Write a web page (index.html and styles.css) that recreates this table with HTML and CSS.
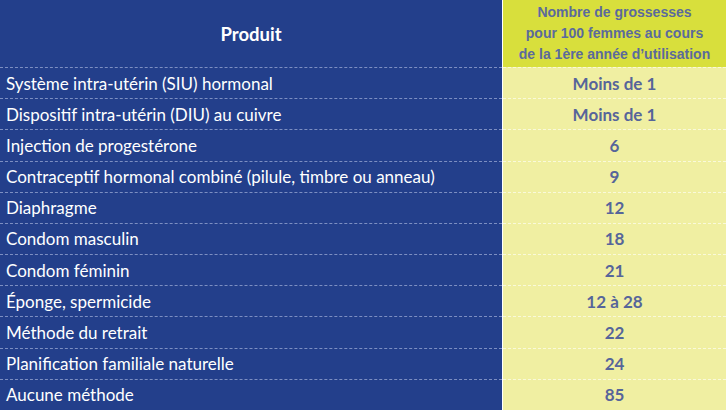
FILE: index.html
```html
<!DOCTYPE html>
<html lang="fr">
<head>
<meta charset="utf-8">
<link rel="stylesheet" href="styles.css">
</head>
<body>
<div class="table">
  <div class="head-left">Produit</div>
  <div class="head-right">Nombre de grossesses<br>pour 100 femmes au cours<br>de la 1ère année d’utilisation</div>

  <div class="cell-left">Système intra-utérin (SIU) hormonal</div><div class="cell-right">Moins de 1</div>
  <div class="cell-left">Dispositif intra-utérin (DIU) au cuivre</div><div class="cell-right">Moins de 1</div>
  <div class="cell-left">Injection de progestérone</div><div class="cell-right">6</div>
  <div class="cell-left">Contraceptif hormonal combiné (pilule, timbre ou anneau)</div><div class="cell-right">9</div>
  <div class="cell-left">Diaphragme</div><div class="cell-right">12</div>
  <div class="cell-left">Condom masculin</div><div class="cell-right">18</div>
  <div class="cell-left">Condom féminin</div><div class="cell-right">21</div>
  <div class="cell-left">Éponge, spermicide</div><div class="cell-right">12 à 28</div>
  <div class="cell-left">Méthode du retrait</div><div class="cell-right">22</div>
  <div class="cell-left">Planification familiale naturelle</div><div class="cell-right">24</div>
  <div class="cell-left">Aucune méthode</div><div class="cell-right">85</div>
</div>
</body>
</html>
```
FILE: styles.css
```css
html, body {
  margin: 0;
  padding: 0;
  background: #ffffff;
}
.table {
  width: 726px;
  height: 410px;
  display: grid;
  grid-template-columns: 502px 1fr;
  grid-template-rows: 67px repeat(11, 1fr);
  column-gap: 1px;
  background: #ffffff;
  font-family: Lato, "Noto Sans", sans-serif;
}
.head-left {
  background: #233f8b;
  color: #ffffff;
  font-weight: 700;
  font-size: 18.5px;
  display: flex;
  align-items: center;
  justify-content: center;
}
.head-right {
  background: #d8df3c;
  color: #5b6a9c;
  font-family: "Liberation Sans", Arial, sans-serif;
  font-weight: 700;
  font-size: 14px;
  line-height: 21px;
  text-align: center;
  display: flex;
  align-items: center;
  justify-content: center;
}
.cell-left {
  background: #233f8b;
  color: #ffffff;
  font-size: 17px;
  padding-left: 6px;
  display: flex;
  align-items: center;
  border-top: 1px dashed rgba(200, 210, 240, 0.55);
}
.cell-right {
  background: #f0efa2;
  color: #56659a;
  font-size: 17px;
  font-weight: 700;
  display: flex;
  align-items: center;
  justify-content: center;
  border-top: 1px dashed rgba(255, 255, 255, 0.6);
}
```
